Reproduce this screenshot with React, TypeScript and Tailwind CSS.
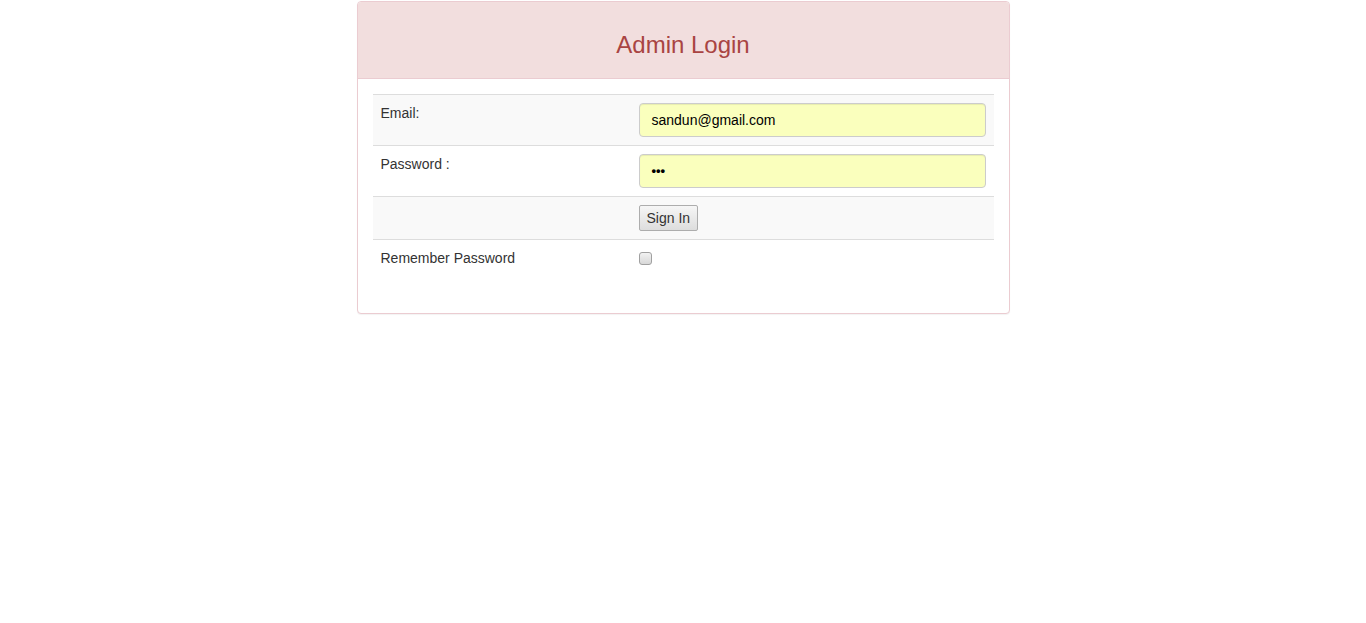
export default function App() {
  return (
    <div className="min-h-screen bg-white font-['Liberation_Sans',Arial,sans-serif] text-[14px] leading-[20px] text-[#333]">
      <div className="mx-auto mt-px w-[653px] rounded-[4px] border border-[#ebccd1] bg-white shadow-[0_1px_1px_rgba(0,0,0,0.05)]">
        <div className="rounded-t-[3px] border-b border-[#ebccd1] bg-[#f2dede] px-[15px] py-[10px]">
          <h3 className="mt-[20px] mb-[10px] text-center text-[24px] leading-[26.4px] font-normal text-[#a94442]">
            Admin Login
          </h3>
        </div>

        <div className="px-[15px] pt-[15px] pb-[17px]">
          <div className="mb-[20px]">
            <div className="grid grid-cols-[258px_1fr] border-t border-[#ddd] bg-[#f9f9f9]">
              <div className="p-[8px]">Email:</div>
              <div className="p-[8px]">
                <div className="flex h-[34px] items-center rounded-[4px] border border-[#ccc] bg-[#faffbd] px-[12px] text-black shadow-[inset_0_1px_1px_rgba(0,0,0,0.075)]">
                  sandun@gmail.com
                </div>
              </div>
            </div>

            <div className="grid grid-cols-[258px_1fr] border-t border-[#ddd] bg-white">
              <div className="p-[8px]">Password :</div>
              <div className="p-[8px]">
                <div className="flex h-[34px] items-center rounded-[4px] border border-[#ccc] bg-[#faffbd] px-[12px] text-[13px] font-bold tracking-[0px] text-black shadow-[inset_0_1px_1px_rgba(0,0,0,0.075)]">
                  •••
                </div>
              </div>
            </div>

            <div className="grid grid-cols-[258px_1fr] border-t border-[#ddd] bg-[#f9f9f9]">
              <div className="p-[8px]"></div>
              <div className="p-[8px]">
                <button className="flex h-[26px] items-center rounded-[2px] border border-[#adadad] bg-gradient-to-b from-[#f6f6f6] to-[#dddddd] px-[7px] text-[14px] text-[#333]">
                  Sign In
                </button>
              </div>
            </div>

            <div className="grid grid-cols-[258px_1fr] border-t border-[#ddd] bg-white">
              <div className="p-[8px]">Remember Password</div>
              <div className="flex items-center p-[8px]">
                <span className="mt-[1px] block h-[13px] w-[13px] rounded-[3px] border border-[#a0a0a0] bg-gradient-to-b from-[#f2f2f2] to-[#d8d8d8]"></span>
              </div>
            </div>
          </div>
        </div>
      </div>
    </div>
  );
}
